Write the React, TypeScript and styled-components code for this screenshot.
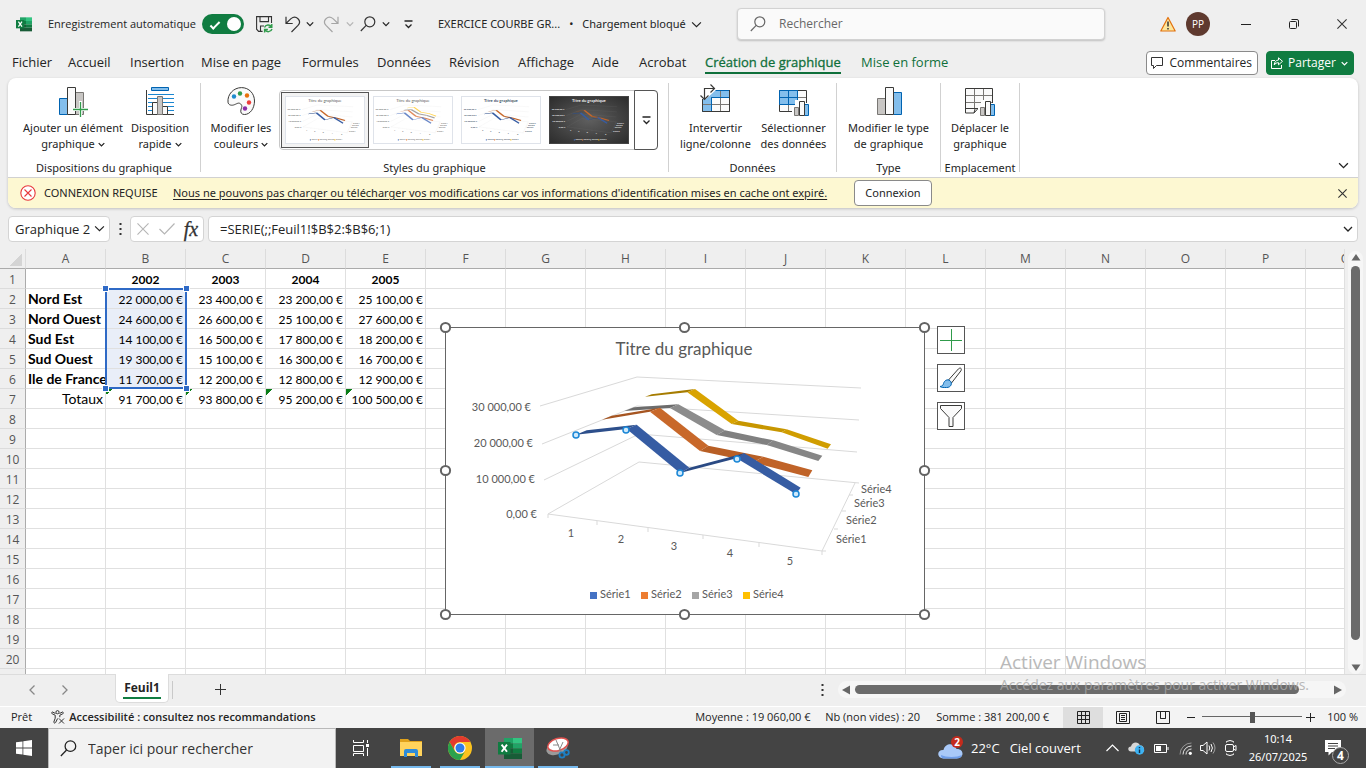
import React from 'react';
import styled, { createGlobalStyle, css } from 'styled-components';

const ui = '"Open Sans", "Noto Sans", sans-serif';
const compact = '"Noto Sans", "Open Sans", sans-serif';
const calibri = 'Lato, "Liberation Sans", sans-serif';
const green = '#107c41';

const Global = createGlobalStyle`
  *, *::before, *::after { box-sizing: border-box; }
  body { margin: 0; background: #efefef; color: #242424; font: 12px/16px ${ui}; overflow: hidden; }
  button, input { font: inherit; color: inherit; margin: 0; }
  svg { display: block; flex: none; }
`;

const Window = styled.div`
  height: 100vh;
  display: flex;
  flex-direction: column;
  position: relative;
`;

/* ---------- generic parts ---------- */

const IconButton = styled.button<{ $w?: number }>`
  width: ${p => p.$w ?? 24}px;
  height: 24px;
  flex: none;
  padding: 0;
  border: 0;
  background: none;
  display: flex;
  align-items: center;
  justify-content: center;
`;

const Chevron = ({ size = 8, color = '#242424', w = 1.3 }: { size?: number; color?: string; w?: number }) => (
  <svg width={size} height={size} viewBox="0 0 8 8" fill="none" stroke={color} strokeWidth={(w * 8) / size}>
    <path d="M.8 2.4 4 5.6 7.2 2.4" />
  </svg>
);

const Lens = ({ size = 16, color = '#444' }: { size?: number; color?: string }) => (
  <svg width={size} height={size} viewBox="0 0 16 16" fill="none" stroke={color} strokeWidth="1.2">
    <circle cx="9.8" cy="5.8" r="5" />
    <path d="M6.2 9.4.8 15" />
  </svg>
);

const Cross = ({ size = 10, color = '#333' }: { size?: number; color?: string }) => (
  <svg width={size} height={size} viewBox="0 0 10 10" fill="none" stroke={color} strokeWidth={11 / size}>
    <path d="M.4.4 9.6 9.6M9.6.4.4 9.6" />
  </svg>
);

const ExcelLogo = ({ size }: { size: number }) => (
  <svg width={size} height={size} viewBox="0 0 24 24">
    <path d="M6 2h9v5.5H6z" fill="#21a366" />
    <path d="M15 2h9v5.5h-9z" fill="#33c481" />
    <path d="M6 7.5h9v5H6z" fill="#107c41" />
    <path d="M15 7.5h9v5h-9z" fill="#21a366" />
    <path d="M6 12.5h9v5H6z" fill="#185c37" />
    <path d="M15 12.5h9v5h-9z" fill="#107c41" />
    <path d="M6 17.5h18V23H6z" fill="#185c37" />
    <path d="M0 6h12.5v12.5H0z" fill="#107c41" />
    <path d="m3.6 8.6 5.4 7.2M9 8.6l-5.4 7.2" stroke="#fff" strokeWidth="1.9" />
  </svg>
);

/* ---------- title bar ---------- */

const TitleBar = styled.header`
  height: 48px;
  flex: none;
  display: flex;
  align-items: center;
  padding-left: 16px;
`;
const TitleLeft = styled.div`
  display: flex;
  align-items: center;
  width: 422px;
  flex: none;
`;
const AutoSave = styled.label`
  display: flex;
  align-items: center;
  justify-content: space-between;
  width: 196px;
  flex: none;
  margin: 0 4px 0 16px;
  font-size: 11px;
  white-space: nowrap;
`;
const Toggle = styled.input`
  appearance: none;
  width: 42px;
  height: 20px;
  border-radius: 10px;
  background: ${green};
  display: flex;
  align-items: center;
  justify-content: space-between;
  padding: 0 3px 0 8px;
  &::before {
    content: '';
    width: 10px;
    height: 5px;
    border-left: 2px solid #fff;
    border-bottom: 2px solid #fff;
    transform: rotate(-45deg);
  }
  &::after { content: ''; width: 14px; height: 14px; border-radius: 50%; background: #fff; }
`;
const DocTitle = styled.div`
  display: flex;
  align-items: center;
  gap: 9px;
  width: 299px;
  flex: none;
  font: 11px/16px ${compact};
  white-space: nowrap;
`;
const StatusButton = styled.button`
  display: flex;
  align-items: center;
  gap: 5px;
  border: 0;
  padding: 0;
  background: none;
`;
const SearchBox = styled.label`
  flex: 0 1 368px;
  height: 32px;
  border: 1px solid #d2d2d2;
  border-radius: 4px;
  background: #fafafa;
  box-shadow: 0 1px 2px #0003;
  display: flex;
  align-items: center;
  gap: 13px;
  padding-left: 12px;
  input { flex: 1; min-width: 0; border: 0; background: none; outline: 0; padding: 0; }
  input::placeholder { color: #686868; opacity: 1; }
`;
const TitleRight = styled.div`
  margin-left: auto;
  display: flex;
  align-items: center;
  flex: none;
`;
const Avatar = styled.button`
  width: 24px;
  height: 24px;
  margin: 0 12px 0 6px;
  padding: 0;
  border: 0;
  border-radius: 50%;
  background: #5f3a2f;
  color: #fff;
  font-size: 10px;
`;

/* ---------- tab row ---------- */

const TabRow = styled.nav`
  height: 30px;
  flex: none;
  display: flex;
  align-items: center;
  padding: 0 12px;
`;
const Tab = styled.a<{ $w: number; $active?: boolean; $green?: boolean }>`
  flex: 0 0 ${p => p.$w}px;
  color: ${p => (p.$active || p.$green ? '#0f703b' : '#242424')};
  text-decoration: none;
  white-space: nowrap;
  font-size: 13px;
  span { display: block; width: fit-content; padding: 2px 0; border-bottom: 2px solid transparent; }
  ${p => p.$active && css`
    font-weight: 500;
    -webkit-text-stroke: 0.3px #0f703b;
    span { border-color: #0f703b; }
  `}
`;
const TabActions = styled.div`
  margin-left: auto;
  display: flex;
  gap: 8px;
`;
const ActionButton = styled.button<{ $primary?: boolean }>`
  height: 24px;
  width: ${p => (p.$primary ? 88 : 112)}px;
  padding: 0 5px 0 4px;
  border: 1px solid ${p => (p.$primary ? green : '#8a8a8a')};
  border-radius: 4px;
  background: ${p => (p.$primary ? green : '#fff')};
  color: ${p => (p.$primary ? '#fff' : '#242424')};
  display: flex;
  align-items: center;
  justify-content: space-between;
`;

/* ---------- ribbon ---------- */

const Card = styled.section`
  flex: none;
  margin: 0 8px;
  border-radius: 8px;
  background: #fff;
  box-shadow: 0 1px 3px #0003;
  overflow: hidden;
  font: 11px/16px ${compact};
`;
const Ribbon = styled.div`
  height: 99px;
  padding-top: 5px;
  display: flex;
`;
const Group = styled.div<{ $w: number }>`
  width: ${p => p.$w}px;
  height: 89px;
  flex: none;
  border-right: 1px solid #d1d1d1;
  display: flex;
  flex-direction: column;
  justify-content: space-between;
  align-items: center;
`;
const GroupBody = styled.div<{ $gap?: number; $left?: number; $right?: number }>`
  display: flex;
  gap: ${p => p.$gap ?? 0}px;
  padding: 4px ${p => p.$right ?? 0}px 0 ${p => p.$left ?? 0}px;
`;
const GroupLabel = styled.div`
  line-height: 8px;
`;
const BigButton = styled.button<{ $w: number }>`
  width: ${p => p.$w}px;
  border: 0;
  padding: 0;
  background: none;
  display: flex;
  flex-direction: column;
  align-items: center;
  gap: 3px;
  white-space: nowrap;
  span { display: flex; flex-direction: column; align-items: center; }
  em { font-style: normal; display: flex; gap: 3px; align-items: center; }
`;
const Gallery = styled.div`
  display: flex;
  width: 379px;
  height: 60px;
  margin-top: 3px;
  padding-left: 1px;
  border: 1px solid #c8c8c8;
  border-radius: 4px;
`;
const Thumb = styled.button<{ $on?: boolean; $dark?: boolean }>`
  width: 88px;
  height: 56px;
  margin: 1px 0 0 0;
  padding: 3px;
  border: 1px solid ${p => (p.$on ? '#555' : 'transparent')};
  background: ${p => (p.$on ? '#f3f3f3' : 'none')};
  svg {
    width: 80px;
    height: 48px;
    border: 1px solid ${p => (p.$dark ? '#444' : '#dfe3ea')};
    background: ${p => (p.$dark ? 'radial-gradient(#5f5f5f, #2c2c2c)' : '#fff')};
  }
`;
const MoreStyles = styled.button`
  width: 24px;
  margin: -1px -1px -1px auto;
  border: 1px solid #555;
  border-radius: 0 4px 4px 0;
  background: #fff;
  padding: 0;
  display: flex;
  align-items: center;
  justify-content: center;
`;
const Spacer = styled.div`
  margin: auto 3px 0 auto;
`;
const Message = styled.div`
  height: 31px;
  border-top: 1px solid #d1d1d1;
  background: #fdf8d2;
  display: flex;
  align-items: center;
  padding: 0 4px 0 12px;
  white-space: nowrap;
  a { flex: 0 1 681px; color: #242424; text-underline-offset: 2px; }
  strong { flex: 0 0 129px; font-weight: 400; margin-left: 8px; }
`;
const ConnectButton = styled.button`
  height: 26px;
  width: 78px;
  border: 1px solid #8a8a8a;
  border-radius: 4px;
  background: #fff;
  padding: 0;
  margin-right: auto;
`;

/* ---------- formula bar ---------- */

const FormulaBar = styled.div`
  height: 41px;
  flex: none;
  display: flex;
  align-items: center;
  padding: 0 8px;
  font-size: 13px;
`;
const Box = styled.div<{ $w?: number }>`
  height: 26px;
  ${p => (p.$w ? `width: ${p.$w}px; flex: none;` : 'flex: 1;')}
  border: 1px solid #d4d4d4;
  border-radius: 4px;
  background: #fff;
  display: flex;
  align-items: center;
  input { flex: 1; min-width: 0; border: 0; padding: 0 0 0 6px; outline: 0; background: none; }
`;
const FormulaInput = styled.input`
  && { padding-left: 11px; }
`;
const Dots = styled.span<{ $w: number }>`
  width: ${p => p.$w}px;
  flex: none;
  display: flex;
  justify-content: center;
`;
const Fx = styled.i`
  font: italic 20px/20px "Liberation Serif", serif;
  -webkit-text-stroke: 0.3px #333;
  color: #333;
`;

/* ---------- sheet ---------- */

const SheetArea = styled.main`
  flex: 1;
  min-height: 0;
  display: flex;
`;
const Canvas = styled.div`
  flex: 1;
  min-width: 0;
  overflow: hidden;
  position: relative;
  border-right: 1px solid #e0e0e0;
`;
const Grid = styled.table`
  border-spacing: 0;
  table-layout: fixed;
  width: 1386px;
  font-family: ${calibri};
  font-size: 12px;
  line-height: 17px;
  color: #000;
  th, td { height: 20px; padding: 2px 2px 0; vertical-align: top; overflow: hidden; white-space: nowrap; }
`;
const ColHead = styled.th`
  font: 12px/15px ${ui};
  color: #555;
  background: #efefef;
  border-right: 1px solid #dcdcdc;
  border-bottom: 1px solid #ababab;
`;
const RowHead = styled.th`
  font: 12px/17px ${ui};
  color: #555;
  background: #efefef;
  border-right: 1px solid #ababab;
  border-bottom: 1px solid #dcdcdc;
`;
const Corner = styled.th`
  background: linear-gradient(135deg, transparent 50%, #d4d4d4 50%) 10px 5px / 12px 12px no-repeat #efefef;
  border-right: 1px solid #dcdcdc;
  border-bottom: 1px solid #ababab;
`;
const Cell = styled.td<{ $bold?: boolean; $label?: boolean; $align?: string; $sel?: boolean; $flag?: boolean }>`
  border-right: 1px solid #e0e0e0;
  border-bottom: 1px solid #e0e0e0;
  background: ${p =>
    p.$sel ? '#e9eef8' : p.$flag ? 'linear-gradient(135deg, #0a7d18 50%, transparent 50%) 0 0 / 6px 6px no-repeat #fff' : '#fff'};
  font-weight: ${p => (p.$bold ? 700 : 400)};
  font-size: ${p => (p.$label ? 14 : 12)}px;
  line-height: ${p => (p.$label ? 15 : 17)}px;
  text-align: ${p => p.$align ?? 'left'};
`;
const RangeOutline = styled.div`
  position: absolute;
  left: 105px;
  top: 39px;
  width: 82px;
  height: 101px;
  border: 2px solid #2f6ac6;
`;
const RangeHandle = styled.i<{ $right?: boolean; $bottom?: boolean }>`
  position: absolute;
  width: 5px;
  height: 5px;
  background: #2f6ac6;
  outline: 1px solid #fff;
  ${p => (p.$right ? 'right' : 'left')}: -4px;
  ${p => (p.$bottom ? 'bottom' : 'top')}: -4px;
`;
const ChartFrame = styled.figure`
  position: absolute;
  left: 445px;
  top: 78px;
  width: 480px;
  height: 288px;
  margin: 0;
  border: 1px solid #666;
  background: #fff;
  svg { margin: -1px; overflow: visible; }
`;
const ChartTools = styled.div`
  position: absolute;
  left: 937px;
  top: 77px;
  display: grid;
  gap: 10px;
`;
const ChartTool = styled.button`
  width: 28px;
  height: 28px;
  padding: 0;
  border: 1px solid #555;
  background: #fff;
  display: flex;
  align-items: center;
  justify-content: center;
`;
const VScroll = styled.div`
  width: 21px;
  flex: none;
  padding: 2px 3px 0;
`;
const VTrack = styled.div`
  height: 100%;
  border-radius: 8px;
  background: #f6f6f6;
  display: flex;
  flex-direction: column;
  align-items: center;
  padding: 1px 0;
`;
const VThumb = styled.div`
  flex: 1;
  width: 9px;
  margin: 4px 0 23px;
  border-radius: 5px;
  background: #6b6b6b;
`;

/* ---------- sheet tabs / status ---------- */

const SheetTabs = styled.div`
  height: 32px;
  flex: none;
  border-top: 1px solid #dcdcdc;
  display: flex;
  align-items: center;
  padding: 0 20px 2px;
`;
const SheetTab = styled.button`
  align-self: flex-start;
  width: 54px;
  height: 29px;
  margin: -1px 0 0 38px;
  padding: 0 8px;
  border: 1px solid #dcdcdc;
  border-top: 0;
  border-radius: 0 0 5px 5px;
  background: #fff;
  font-weight: 700;
  span { display: block; margin: 0 -1px; line-height: 19px; border-bottom: 2px solid ${green}; }
`;
const Divider = styled.i`
  width: 1px;
  height: 18px;
  margin: 0 35px 0 3px;
  background: #c9c9c9;
`;
const HTrack = styled.div`
  flex: 0 0 508px;
  height: 17px;
  border-radius: 9px;
  background: #f6f6f6;
  display: flex;
  align-items: center;
  padding: 0 3px;
`;
const HThumb = styled.div`
  flex: 1;
  height: 9px;
  margin: 0 34px 0 4px;
  border-radius: 5px;
  background: #6b6b6b;
`;
const StatusBar = styled.footer`
  height: 22px;
  flex: none;
  border-top: 1px solid #fff;
  background: #f3f3f3;
  display: flex;
  align-items: center;
  padding: 0 8px 1px 11px;
  font-size: 11px;
  white-space: nowrap;
`;
const A11y = styled.button`
  border: 0;
  background: none;
  padding: 0;
  margin: 0 auto 0 19px;
  display: flex;
  gap: 4px;
  align-items: center;
  font-weight: 600;
`;
const Stat = styled.span<{ $w: number }>`
  width: ${p => p.$w}px;
`;
const ViewButton = styled.button<{ $on?: boolean }>`
  width: 40px;
  height: 21px;
  padding: 0;
  border: 0;
  background: ${p => (p.$on ? '#dedede' : 'none')};
  display: flex;
  align-items: center;
  justify-content: center;
`;
const Zoom = styled.input`
  appearance: none;
  width: 100px;
  height: 12px;
  margin: 0 3px;
  background: linear-gradient(#666, #666) 0 5px / 100% 1px no-repeat;
  &::-webkit-slider-thumb { appearance: none; width: 5px; height: 11px; background: #555; }
`;

/* ---------- taskbar ---------- */

const Taskbar = styled.footer`
  height: 40px;
  flex: none;
  background: #444;
  color: #fff;
  display: flex;
  align-items: center;
  font-size: 14px;
`;
const TaskSearch = styled.label`
  width: 288px;
  height: 40px;
  border: 1px solid #b9b9b9;
  border-bottom: 0;
  background: #f2f2f2;
  color: #333;
  display: flex;
  align-items: center;
  gap: 11px;
  padding-left: 11px;
  input { flex: 1; min-width: 0; border: 0; background: none; padding: 0; outline: 0; }
  input::placeholder { color: #333; opacity: 1; }
`;
const TaskButton = styled.button<{ $running?: boolean; $active?: boolean; $w?: number }>`
  width: ${p => p.$w ?? 49}px;
  height: 40px;
  padding: 0;
  border: 0;
  border-left: ${p => (p.$running ? 4 : 0)}px solid transparent;
  border-right: ${p => (p.$running ? 5 : 0)}px solid transparent;
  background: ${p =>
    p.$active
      ? 'linear-gradient(#76b9ed, #76b9ed) 0 100% / 100% 2px no-repeat #6b6b6b'
      : p.$running
        ? 'linear-gradient(#76b9ed, #76b9ed) 0 100% / 100% 2px no-repeat padding-box'
        : 'none'};
  display: flex;
  align-items: center;
  justify-content: center;
`;
const Tray = styled.div`
  margin-left: auto;
  display: flex;
  align-items: center;
`;
const Weather = styled.button`
  border: 0;
  padding: 0;
  background: none;
  color: inherit;
  width: 159px;
  display: flex;
  align-items: center;
  font-size: 13px;
  white-space: nowrap;
  span { margin-left: 6px; }
  span + span { margin-left: 10px; }
`;
const Clock = styled.time`
  width: 76px;
  text-align: center;
  font: 11px/18px ${compact};
`;
const Notifications = styled.button`
  width: 50px;
  padding: 8px 0 0 9px;
  border: 0;
  background: none;
`;
const Watermark = styled.div`
  position: absolute;
  left: 1000px;
  bottom: 73px;
  color: #a8a8a8;
  opacity: .8;
  font-size: 14px;
  line-height: 20px;
  white-space: nowrap;
  pointer-events: none;
  p { margin: 0; }
  p:first-child { font-size: 19px; line-height: 26px; }
`;

/* ---------- chart drawing ---------- */

const series = [
  { name: 'Série4', key: '#ffc000', faces: [['645,245 665,238 795,222 772,232', '#a67c00'], ['772,232 795,222 925,317 905,327', '#d9a300'], ['905,327 925,317 1070,343 1055,352', '#c79600'], ['1055,352 1070,343 1203,388 1193,401', '#d09d00']] },
  { name: 'Série3', key: '#a5a5a5', faces: [['583,288 612,277 745,268 720,279', '#6c6c6c'], ['720,279 745,268 885,346 860,360', '#8c8c8c'], ['860,360 885,346 1030,376 1010,390', '#808080'], ['1010,390 1030,376 1177,422 1165,438', '#868686']] },
  { name: 'Série2', key: '#ed7d31', faces: [['516,314 545,302 690,278 660,290', '#a65521'], ['660,290 690,278 835,392 810,408', '#c8682a'], ['810,408 835,392 1000,425 970,442', '#b85f25'], ['970,442 1000,425 1147,466 1135,486', '#c06328']] },
  { name: 'Série1', key: '#4472c4', faces: [['438,359 470,346 620,329 590,342', '#2d4f8b'], ['590,342 620,329 778,458 750,474', '#365ca3'], ['750,474 778,458 942,415 920,430', '#2a4a84'], ['920,430 942,414 1112,518 1097,537', '#365ca3']] },
];

const Plot = ({ lines = '#d9d9d9', keep = [0, 1, 2, 3], colors }: { lines?: string; keep?: number[]; colors?: string[] }) => (
  <>
    <g fill="none" stroke={lines}>
      <path d="M95 79 192 50 416 61M97 117 192 79 414 93M99 153 194 107 412 125M103 187 194 135 414 156M103 187 377 224 410 156" />
      <path d="M103 187v4M152 194v4M203 201v4M258 208v4M314 216v4M377 224v4M404 168h4M397 184h4M389 202h4M377 224h4" />
    </g>
    <g transform="translate(-15 -12) scale(.33333)">
      {series.map((s, i) => keep.includes(i) && s.faces.map(([pts, c]) => <polygon key={pts} points={pts} fill={colors ? colors[i] : c} />))}
    </g>
  </>
);

const PlotText = ({ fill = '#595959', mini = false, bold = false }: { fill?: string; mini?: boolean; bold?: boolean }) => (
  <g fill={fill} fontFamily={calibri} fontSize={mini ? 15 : 11} fontWeight={bold ? 700 : 400}>
    <text x="239" y={mini ? 32 : 28} fontSize={mini ? 26 : 17} textAnchor="middle">Titre du graphique</text>
    <g textAnchor="end">
      <text x="86" y="84">30 000,00 €</text>
      <text x="88" y="120">20 000,00 €</text>
      <text x="90" y="156">10 000,00 €</text>
      <text x="92" y="191">0,00 €</text>
    </g>
    <g textAnchor="middle">
      <text x="126" y="210">1</text>
      <text x="176" y="216">2</text>
      <text x="229" y="223">3</text>
      <text x="285" y="230">4</text>
      <text x="345" y="238">5</text>
    </g>
    <text x="416" y="166">Série4</text>
    <text x="409" y="180">Série3</text>
    <text x="401" y="197">Série2</text>
    <text x="391" y="216">Série1</text>
    {[...series].reverse().map((s, i) => (
      <g key={s.name}>
        <rect x={145 + i * 51} y="265" width="7" height="7" fill={s.key} />
        <text x={155 + i * 51} y="271">{s.name}</text>
      </g>
    ))}
  </g>
);

const Chart = () => (
  <ChartFrame aria-label="Titre du graphique">
    <svg width="480" height="288" viewBox="0 0 480 288">
      <Plot />
      <PlotText />
      <g fill="#cfe9fb" stroke="#1b87d6" strokeWidth="1.5">
        {[[131, 108], [181, 103], [235, 146], [292, 132], [351, 167]].map(([x, y]) => <circle key={x} cx={x} cy={y} r="3" />)}
      </g>
      <g fill="#fff" stroke="#636363" strokeWidth="2">
        {[[0, 0], [239, 0], [479, 0], [0, 143], [479, 143], [0, 287], [239, 287], [479, 287]].map(([x, y]) => (
          <circle key={`${x}-${y}`} cx={x + .5} cy={y + .5} r="4.6" />
        ))}
      </g>
    </svg>
  </ChartFrame>
);

/* ---------- ribbon icons ---------- */

const Svg30 = ({ children }: { children: React.ReactNode }) => (
  <svg width="30" height="30" viewBox="0 0 30 30" fill="none" overflow="visible">{children}</svg>
);
const blue = { fill: '#83beec', stroke: '#0063b1' };
const grey = { fill: '#c8c6c4', stroke: '#797774' };
const white = { fill: '#fafafa', stroke: '#3a3a38' };

const AddElementIcon = () => (
  <Svg30>
    <path {...blue} d="M1.500 11.500h8v16h-8z" />
    <path {...grey} d="M17.500 5.500h8v22h-8z" />
    <path {...white} d="M9.500.5h8v27h-8z" />
    <path d="M22.500 14v16M14.500 22.500h15.500" stroke="#fff" strokeWidth="3" />
    <path d="M22.500 15v15M15 22.500h15" stroke="#309b4b" strokeWidth="1.300" />
  </Svg30>
);
const QuickLayoutIcon = () => (
  <Svg30>
    <path {...blue} d="M6.500.5h17v3h-17z" />
    <path d="M3 7.500h26M3 11.500h26M3 15.500h26M3 19.500h26M3 23.500h26" stroke="#1a86d0" />
    <path d="M1.500 3v24.500H29" stroke="#3a3a38" />
    <path {...white} d="M7.500 15.500h5v12h-5zM17.500 19.500h5v8h-5z" />
    <path {...grey} d="M12.500 9.500h5v18h-5z" />
  </Svg30>
);
const PaletteIcon = () => (
  <Svg30>
    <path {...white} d="M2 15.200C1.200 7.500 7.500.6 15.500.6 23 .6 28.500 6.500 28.500 14c0 7.500-4.500 13.500-10 13.500-3 0-4.200-2-3.600-4.500.6-2.600 1.900-4-.2-6-1.900-1.800-3.600-.4-6 .6-3 1.300-6.300.6-6.700-2.400z" />
    <circle cx="8" cy="9.500" r="2.200" fill="#1e8bcd" />
    <circle cx="14" cy="6.500" r="2.200" fill="#309b4b" />
    <circle cx="21" cy="8.500" r="2.200" fill="#e8710a" />
    <circle cx="23" cy="15.500" r="2.200" fill="#ed3d3b" />
    <circle cx="19" cy="21.500" r="2.200" fill="#8b2fa8" />
  </Svg30>
);
const SwitchIcon = () => (
  <Svg30>
    <path {...white} d="M1.500 3.500h27v21h-27z" />
    <path d="M8 4h20v6H8zM2 10h8v14H2z" fill="#83beec" />
    <path d="M10.500 10v14M19.500 10v14M10 10.500h18M2 17.500h26M19.500 4v6" stroke="#797774" />
    <path d="M8 3.500h20.500M1.500 24.500h9V10.500h18" stroke="#0063b1" />
    <path d="M0-2h15v5L5 12H0z" fill="#fff" />
    <path d="M28.500 3v21.500H1.500" stroke="#3a3a38" />
    <path d="M3.500 12V1.500h10M-.5 8.500l4 4 4-4M9.500-2.500l4 4-4 4" stroke="#3a3a38" strokeWidth="1.200" />
  </Svg30>
);
const MiniBars = () => (
  <>
    <path d="M13 19h3v-6h8v3h6v14H13z" fill="#fff" />
    <path {...grey} d="M15.500 20.500h4v8h-4z" />
    <path {...blue} d="M25.500 17.500h4v11h-4z" />
    <path {...white} d="M20.500 14.500h5v14h-5z" />
  </>
);
const SelectDataIcon = () => (
  <Svg30>
    <path {...white} d="M.5 3.500h27v21H.5z" />
    <path d="M18.500 4v20M1 17.500h26M9.500 17v7M19 10.500h8" stroke="#797774" />
    <path {...blue} d="M.5 3.500h18v14H.5zM9.500 4v13M1 10.500h17" />
    <MiniBars />
  </Svg30>
);
const ChartTypeIcon = () => (
  <Svg30>
    <path {...grey} d="M3.500 11.500h8v16h-8z" />
    <path {...blue} d="M19.500 5.500h8v22h-8z" />
    <path {...white} d="M11.500.5h8v27h-8z" />
  </Svg30>
);
const MoveChartIcon = () => (
  <Svg30>
    <path {...white} d="M.5 1.500h27v20H13l-4 4.500H.5z" />
    <path d="M1 8.500h26M1 15.500h26M9.500 2v19M18.500 2v19" stroke="#797774" />
    <path d="M.5 21.500H13M9 26l1-4" stroke="#3a3a38" />
    <MiniBars />
  </Svg30>
);

const MoreIcon = () => (
  <svg width="9" height="9" viewBox="0 0 9 9" fill="none" stroke="#242424" strokeWidth="1.300"><path d="M.5 1h8M1.500 4.500l3 3 3-3" /></svg>
);
const DotsIcon = () => (
  <svg width="3" height="12" viewBox="0 0 3 12" fill="#333"><path d="M.5 0h2v2h-2zM.5 5h2v2h-2zM.5 10h2v2h-2z" /></svg>
);
const Arrow = ({ d }: { d: string }) => (
  <svg width="10" height="10" viewBox="0 0 10 10" fill="#666"><path d={d} /></svg>
);

const Big = ({ w, icon, a, b, menu }: { w: number; icon: React.ReactNode; a: string; b: string; menu?: boolean }) => (
  <BigButton $w={w}>
    {icon}
    <span>
      {a}
      <em>{b}{menu && <Chevron size={7} />}</em>
    </span>
  </BigButton>
);

/* ---------- data ---------- */

const tabs: [string, number][] = [
  ['Fichier', 56], ['Accueil', 62], ['Insertion', 71], ['Mise en page', 101], ['Formules', 75], ['Données', 72],
  ['Révision', 69], ['Affichage', 74], ['Aide', 47], ['Acrobat', 66], ['Création de graphique', 156], ['Mise en forme', 90],
];
const cols = 'ABCDEFGHIJKLMNOPQ'.split('');
const rows: Record<number, string[]> = {
  1: ['', '2002', '2003', '2004', '2005'],
  2: ['Nord Est', '22 000,00 €', '23 400,00 €', '23 200,00 €', '25 100,00 €'],
  3: ['Nord Ouest', '24 600,00 €', '26 600,00 €', '25 100,00 €', '27 600,00 €'],
  4: ['Sud Est', '14 100,00 €', '16 500,00 €', '17 800,00 €', '18 200,00 €'],
  5: ['Sud Ouest', '19 300,00 €', '15 100,00 €', '16 300,00 €', '16 700,00 €'],
  6: ['Ile de France', '11 700,00 €', '12 200,00 €', '12 800,00 €', '12 900,00 €'],
  7: ['Totaux', '91 700,00 €', '93 800,00 €', '95 200,00 €', '100 500,00 €'],
};

const Spreadsheet = () => (
  <Grid>
    <colgroup>
      <col style={{ width: 26 }} />
      {cols.map(c => <col key={c} style={{ width: 80 }} />)}
    </colgroup>
    <thead>
      <tr>
        <Corner />
        {cols.map(c => <ColHead key={c} scope="col">{c}</ColHead>)}
      </tr>
    </thead>
    <tbody>
      {Array.from({ length: 21 }, (_, i) => i + 1).map(r => (
        <tr key={r}>
          <RowHead scope="row">{r < 21 ? r : ''}</RowHead>
          {cols.map((c, i) => (
            <Cell
              key={c}
              $label={i === 0}
              $bold={r === 1 || (i === 0 && r < 7)}
              $align={r === 1 ? 'center' : i > 0 || r === 7 ? 'right' : 'left'}
              $sel={i === 1 && r > 1 && r < 7}
              $flag={r === 7 && i > 0 && i < 5}
            >
              {rows[r]?.[i]}
            </Cell>
          ))}
        </tr>
      ))}
    </tbody>
  </Grid>
);

export default function App() {
  return (
    <Window>
      <Global />

      <TitleBar>
        <TitleLeft>
          <ExcelLogo size={16} />
          <AutoSave>
            Enregistrement automatique
            <Toggle type="checkbox" defaultChecked />
          </AutoSave>
          <IconButton $w={32} aria-label="Enregistrer">
            <svg width="17" height="17" viewBox="0 0 17 17" fill="none" stroke="#333" strokeWidth="1.100">
              <path d="M15.500 7V.6H.6v12.600l2 2.200h4M4 .6v5h8.500v-5M4.500 15v-5H8" />
              <path d="M8.500 11.500c1-3 5.500-3.500 7-.5M15.800 8v3.300h-3.300M16 13c-1 3.200-5.500 3.700-7.200.7M8.600 16.500v-3h3.300" stroke="#309b4b" strokeWidth="1.400" />
            </svg>
          </IconButton>
          <IconButton $w={25} aria-label="Annuler">
            <svg width="16" height="17" viewBox="0 0 16 17" fill="none" stroke="#333" strokeWidth="1.200">
              <path d="M1 .8v6.700h6.700M1.200 7.300 6 2.600c5-4 11.300 2 7 6.800L6.500 16" />
            </svg>
          </IconButton>
          <IconButton $w={10} aria-label="Options d'annulation"><Chevron /></IconButton>
          <IconButton $w={31} aria-label="Rétablir">
            <svg width="16" height="17" viewBox="0 0 16 17" fill="none" stroke="#a5a5a5" strokeWidth="1.200">
              <path d="M15 .8v6.700H8.300M14.800 7.300 10 2.600C5-1.400-1.300 4.600 3 9.400L9.500 16" />
            </svg>
          </IconButton>
          <IconButton $w={8} aria-label="Options de rétablissement"><Chevron color="#b5b5b5" /></IconButton>
          <IconButton $w={27} aria-label="Rechercher"><Lens color="#333" /></IconButton>
          <IconButton $w={10} aria-label="Options de recherche"><Chevron /></IconButton>
          <IconButton $w={35} aria-label="Personnaliser"><MoreIcon /></IconButton>
        </TitleLeft>
        <DocTitle>
          <span>EXERCICE COURBE GR...</span>
          <span>•</span>
          <StatusButton>Chargement bloqué <Chevron size={11} w={1.2} /></StatusButton>
        </DocTitle>
        <SearchBox>
          <Lens color="#666" />
          <input type="text" placeholder="Rechercher" aria-label="Rechercher" />
        </SearchBox>
        <TitleRight>
          <IconButton aria-label="Avertissement">
            <svg width="16" height="16" viewBox="0 0 16 16">
              <path d="M8 1.500 15.200 15H.8z" fill="#fde69b" stroke="#e2700c" strokeWidth="1.200" strokeLinejoin="round" />
              <path d="M8 5.500v5M8 12v1.600" stroke="#333" strokeWidth="1.500" />
            </svg>
          </IconButton>
          <Avatar>PP</Avatar>
          <IconButton $w={48} aria-label="Réduire"><svg width="10" height="10" stroke="#222"><path d="M0 5.500h10" /></svg></IconButton>
          <IconButton $w={48} aria-label="Restaurer">
            <svg width="10" height="10" viewBox="0 0 10 10" fill="none" stroke="#222"><rect x=".5" y="2.500" width="7" height="7" rx="1" /><path d="M2.500.500H8Q9.500.500 9.500 2v5.500" /></svg>
          </IconButton>
          <IconButton $w={48} aria-label="Fermer"><Cross /></IconButton>
        </TitleRight>
      </TitleBar>

      <TabRow>
        {tabs.map(([t, w]) => (
          <Tab key={t} href="#" $w={w} $active={t === 'Création de graphique'} $green={t === 'Mise en forme'}><span>{t}</span></Tab>
        ))}
        <TabActions>
          <ActionButton>
            <svg width="12" height="12" viewBox="0 0 12 12" fill="none" stroke="#333"><path d="M.5.500h11v8H5.500l-3 3v-3h-2z" /></svg>
            Commentaires
          </ActionButton>
          <ActionButton $primary>
            <svg width="12" height="12" viewBox="0 0 12 12" fill="none" stroke="#fff"><path d="M4 3.500H.5v8h10V8M7.500.800l4 3.500-4 3.500V5.700C5.500 5.600 4.200 6.500 3.200 8c.2-3 1.800-4.800 4.300-5z" /></svg>
            Partager
            <Chevron size={7} color="#fff" />
          </ActionButton>
        </TabActions>
      </TabRow>

      <Card>
        <Ribbon>
          <Group $w={193}>
            <GroupBody $left={8}>
              <Big w={104} icon={<AddElementIcon />} a="Ajouter un élément" b="graphique" menu />
              <Big w={70} icon={<QuickLayoutIcon />} a="Disposition" b="rapide" menu />
            </GroupBody>
            <GroupLabel>Dispositions du graphique</GroupLabel>
          </Group>
          <Group $w={468}>
            <GroupBody $gap={4} $right={4}>
              <Big w={68} icon={<PaletteIcon />} a="Modifier les" b="couleurs" menu />
              <Gallery>
                <Thumb $on aria-label="Style 1">
                  <svg viewBox="0 0 480 288"><Plot keep={[2, 3]} /><PlotText mini /></svg>
                </Thumb>
                <Thumb aria-label="Style 2">
                  <svg viewBox="0 0 480 288"><Plot colors={['#ffd34d', '#a0a0a0', '#e08a5c', '#6a88c8']} /><PlotText mini /></svg>
                </Thumb>
                <Thumb aria-label="Style 3">
                  <svg viewBox="0 0 480 288"><Plot keep={[2, 3]} /><PlotText mini bold fill="#44546a" /></svg>
                </Thumb>
                <Thumb $dark aria-label="Style 4">
                  <svg viewBox="0 0 480 288"><Plot lines="#777" keep={[2, 3]} /><PlotText mini bold fill="#eee" /></svg>
                </Thumb>
                <MoreStyles aria-label="Autres styles"><MoreIcon /></MoreStyles>
              </Gallery>
            </GroupBody>
            <GroupLabel>Styles du graphique</GroupLabel>
          </Group>
          <Group $w={168}>
            <GroupBody $left={4}>
              <Big w={78} icon={<SwitchIcon />} a="Intervertir" b="ligne/colonne" />
              <Big w={78} icon={<SelectDataIcon />} a="Sélectionner" b="des données" />
            </GroupBody>
            <GroupLabel>Données</GroupLabel>
          </Group>
          <Group $w={104}>
            <GroupBody><Big w={90} icon={<ChartTypeIcon />} a="Modifier le type" b="de graphique" /></GroupBody>
            <GroupLabel>Type</GroupLabel>
          </Group>
          <Group $w={79}>
            <GroupBody><Big w={70} icon={<MoveChartIcon />} a="Déplacer le" b="graphique" /></GroupBody>
            <GroupLabel>Emplacement</GroupLabel>
          </Group>
          <Spacer><IconButton aria-label="Réduire le ruban"><Chevron size={11} /></IconButton></Spacer>
        </Ribbon>
        <Message>
          <svg width="16" height="16" viewBox="0 0 16 16" fill="#fff" stroke="#e8383d" strokeWidth="1.100"><circle cx="8" cy="8" r="7.200" /><path d="m4.500 4.500 7 7m0-7-7 7" /></svg>
          <strong>CONNEXION REQUISE</strong>
          <a href="#">Nous ne pouvons pas charger ou télécharger vos modifications car vos informations d'identification mises en cache ont expiré.</a>
          <ConnectButton>Connexion</ConnectButton>
          <IconButton aria-label="Fermer le message"><Cross size={9} /></IconButton>
        </Message>
      </Card>

      <FormulaBar>
        <Box $w={102}>
          <input type="text" defaultValue="Graphique 2" aria-label="Zone Nom" />
          <IconButton $w={19} aria-label="Liste des noms"><Chevron size={11} w={1.2} /></IconButton>
        </Box>
        <Dots $w={20}><DotsIcon /></Dots>
        <Box $w={74}>
          <IconButton aria-label="Annuler la saisie"><Cross size={12} color="#b5b5b5" /></IconButton>
          <IconButton aria-label="Valider"><svg width="16" height="12" viewBox="0 0 16 12" fill="none" stroke="#b5b5b5" strokeWidth="1.200"><path d="m.5 6 5 5L15.500.500" /></svg></IconButton>
          <IconButton aria-label="Insérer une fonction"><Fx>fx</Fx></IconButton>
        </Box>
        <Dots $w={4} />
        <Box>
          <FormulaInput type="text" defaultValue="=SERIE(;;Feuil1!$B$2:$B$6;1)" aria-label="Formule" />
          <IconButton $w={18} aria-label="Développer"><Chevron size={10} /></IconButton>
        </Box>
      </FormulaBar>

      <SheetArea>
        <Canvas>
          <Spreadsheet />
          <RangeOutline>
            <RangeHandle /><RangeHandle $right /><RangeHandle $bottom /><RangeHandle $right $bottom />
          </RangeOutline>
          <Chart />
          <ChartTools>
            <ChartTool aria-label="Éléments du graphique">
              <svg width="22" height="22" stroke="#309b4b"><path d="M0 11.500h22M11.500 0v22" /></svg>
            </ChartTool>
            <ChartTool aria-label="Styles du graphique">
              <svg width="24" height="24" viewBox="0 0 24 24" fill="#fafafa" stroke="#3a3a38">
                <path d="M9.500 14 19.500 2.800c2-1.700 3.800-.2 2.300 2.200L12.500 17z" />
                <path d="M1 20.500c2-.2 3-1 3.500-3 .8-3 4-4.800 6.500-2.800 2.800 2.500 1 7-3.500 6.800-2.500 0-5 .2-6.500-1z" fill="#83beec" stroke="#0063b1" />
              </svg>
            </ChartTool>
            <ChartTool aria-label="Filtres du graphique">
              <svg width="22" height="22" viewBox="0 0 22 22" fill="#fafafa" stroke="#3a3a38"><path d="M.5.500h21v3l-8.500 9v9H9v-9l-8.500-9z" /></svg>
            </ChartTool>
          </ChartTools>
        </Canvas>
        <VScroll>
          <VTrack>
            <Arrow d="M5 2 9.500 8.500h-9z" />
            <VThumb />
            <Arrow d="M5 8 9.500 1.500h-9z" />
          </VTrack>
        </VScroll>
      </SheetArea>

      <SheetTabs>
        <IconButton aria-label="Feuille précédente"><svg width="6" height="10" viewBox="0 0 6 10" fill="none" stroke="#888" strokeWidth="1.300"><path d="M5.500.500 1 5l4.500 4.500" /></svg></IconButton>
        <Dots $w={9} />
        <IconButton aria-label="Feuille suivante"><svg width="6" height="10" viewBox="0 0 6 10" fill="none" stroke="#888" strokeWidth="1.300"><path d="M.5.500 5 5 .5 9.500" /></svg></IconButton>
        <SheetTab><span>Feuil1</span></SheetTab>
        <Divider />
        <IconButton aria-label="Nouvelle feuille"><svg width="11" height="11" stroke="#333"><path d="M0 5.500h11M5.500 0v11" /></svg></IconButton>
        <Spacer />
        <Dots $w={32}><DotsIcon /></Dots>
        <HTrack>
          <Arrow d="M1 5 9 .5v9z" />
          <HThumb />
          <Arrow d="M9 5 1 .5v9z" />
        </HTrack>
      </SheetTabs>

      <StatusBar>
        <span>Prêt</span>
        <A11y>
          <svg width="14" height="14" viewBox="0 0 14 14" fill="none" stroke="#333">
            <circle cx="6.500" cy="2.200" r="1.600" />
            <path d="M4.500 3.500 1.500 2C.5 2 .5 3.500 1.200 3.800l3 1.400v3L2.800 12c0 1.200 1.300 1.500 1.800.5l2-4M8.500 3.500l3-1.500c1 0 1 1.500.300 1.800l-3 1.400v2M8 8.500l5 5m0-5-5 5" />
          </svg>
          Accessibilité : consultez nos recommandations
        </A11y>
        <Stat $w={130}>Moyenne : 19 060,00 €</Stat>
        <Stat $w={111}>Nb (non vides) : 20</Stat>
        <Stat $w={127}>Somme : 381 200,00 €</Stat>
        <ViewButton $on aria-label="Normal"><svg width="13" height="13" viewBox="0 0 13 13" fill="none" stroke="#222"><path d="M.5.500h12v12H.5zM4.500 0v13M8.500 0v13M0 4.500h13M0 8.500h13" /></svg></ViewButton>
        <ViewButton aria-label="Mise en page"><svg width="14" height="13" viewBox="0 0 14 13" fill="none" stroke="#222"><path d="M.5.500h13v12H.5zM3.500 2.500h7v8h-7zM5 4.500h4M5 6.500h4M5 8.500h4" /></svg></ViewButton>
        <ViewButton aria-label="Sauts de page"><svg width="14" height="13" viewBox="0 0 14 13" fill="none" stroke="#222"><path d="M.5.500h13v12H.5zM4.500.500v7h5v-7M4.500 7.500h5" /></svg></ViewButton>
        <IconButton $w={16} aria-label="Zoom arrière"><svg width="8" height="9" stroke="#222"><path d="M0 4.500h8" /></svg></IconButton>
        <Zoom type="range" min="10" max="190" defaultValue="100" aria-label="Zoom" />
        <IconButton $w={10} aria-label="Zoom avant"><svg width="9" height="9" stroke="#222"><path d="M0 4.500h9M4.500 0v9" /></svg></IconButton>
        <Dots $w={12} />
        <span>100 %</span>
      </StatusBar>

      <Taskbar>
        <TaskButton $w={48} aria-label="Démarrer">
          <svg width="16" height="16" viewBox="0 0 16 16" fill="#fff"><path d="M0 2.300 6.500 1.400v6.200H0zM7.300 1.300 16 0v7.600H7.300zM0 8.400h6.500v6.200L0 13.700zM7.300 8.400H16V16l-8.700-1.200z" /></svg>
        </TaskButton>
        <TaskSearch>
          <Lens size={17} color="#222" />
          <input type="text" placeholder="Taper ici pour rechercher" aria-label="Recherche Windows" />
        </TaskSearch>
        <TaskButton aria-label="Affichage des tâches">
          <svg width="16" height="16" viewBox="0 0 16 16" fill="none" stroke="#fff"><path d="M.5 0v2.500h10V0M.5 5.500h10v6H.5zM.5 16v-2.500h10V16M14.500 0v3M14.500 8v8" /><path d="M13 4h3v3h-3z" fill="#fff" stroke="none" /></svg>
        </TaskButton>
        <Dots $w={2} />
        <TaskButton $running aria-label="Explorateur de fichiers">
          <svg width="22" height="18" viewBox="0 0 22 18"><path d="M0 0h8l2 2h12v15H0z" fill="#e0a21b" /><path d="M0 3h22v14H0z" fill="#ffd35c" /><path d="M4 18v-6q0-2 2-2h10q2 0 2 2v6h-3v-4H7v4z" fill="#2f8bd8" /></svg>
        </TaskButton>
        <TaskButton $running aria-label="Google Chrome">
          <svg width="24" height="24" viewBox="0 0 24 24">
            <circle cx="12" cy="12" r="12" fill="#fcc31e" />
            <path d="M1.600 6A12 12 0 0 1 22.400 6H12a6 6 0 0 0-5.200 9z" fill="#e33b2e" />
            <path d="M1.600 6 6.800 15A6 6 0 0 0 17.200 15L12 24A12 12 0 0 1 1.600 6z" fill="#2ba24c" />
            <circle cx="12" cy="12" r="5.600" fill="#fff" /><circle cx="12" cy="12" r="4.500" fill="#2f7de9" />
          </svg>
        </TaskButton>
        <TaskButton $active aria-label="Excel"><ExcelLogo size={24} /></TaskButton>
        <TaskButton $running aria-label="Outil Capture">
          <svg width="24" height="22" viewBox="0 0 24 22" fill="none">
            <ellipse cx="11" cy="11" rx="11" ry="6.500" fill="#9b9b9b" transform="rotate(-20 11 11)" />
            <ellipse cx="12" cy="7.500" rx="10.500" ry="6" fill="#fff" stroke="#e0524f" strokeWidth="1.500" transform="rotate(-18 12 7.500)" />
            <path d="m10 3 5 12M17 5l-4 9M7 8h6" stroke="#888" />
            <circle cx="16" cy="18" r="2.600" stroke="#1d7fc4" strokeWidth="1.800" /><circle cx="20.500" cy="15.500" r="2.300" stroke="#1d7fc4" strokeWidth="1.800" />
          </svg>
        </TaskButton>
        <Tray>
          <Weather>
            <svg width="27" height="26" viewBox="0 0 27 26">
              <path d="M5.500 23.500c-7 0-7-9 0-8.500C7 7.500 17 7.500 18.500 14c8-.5 8 9.500 0 9.500z" fill="#a9c9f8" />
              <path d="M3 20c5 2.500 16 2.500 21 0-.8 2.500-2.500 3.500-5.500 3.500h-13C4 23.500 3 22 3 20z" fill="#6f9eea" />
              <circle cx="19" cy="7" r="6" fill="#c42b1c" />
              <text x="19" y="10.500" fontSize="10" fontWeight="700" fill="#fff" textAnchor="middle">2</text>
            </svg>
            <span>22°C</span><span>Ciel couvert</span>
          </Weather>
          <IconButton $w={30} aria-label="Icônes cachées"><svg width="13" height="8" viewBox="0 0 13 8" fill="none" stroke="#fff" strokeWidth="1.200"><path d="M.5 7 6.500 1l6 6" /></svg></IconButton>
          <IconButton $w={18} aria-label="OneDrive">
            <svg width="17" height="14" viewBox="0 0 17 14"><path d="M3 10.500C-.8 10-.5 5.500 3 5.500 4 .5 10.500.3 12 4.500c3-.3 4.500 2 4 6z" fill="#d6d6d6" /><circle cx="11.500" cy="9" r="4.700" fill="#3db2f2" /><path d="M11.500 6v1.300M11.500 8.500v3.500" stroke="#12304a" strokeWidth="1.400" /></svg>
          </IconButton>
          <IconButton $w={32} aria-label="Batterie"><svg width="15" height="9" viewBox="0 0 15 9" fill="none" stroke="#fff"><path d="M.5.500h12v8H.5zM14 3v3" /><path d="M2 2h5v5H2z" fill="#fff" stroke="none" /></svg></IconButton>
          <IconButton $w={17} aria-label="Réseau"><svg width="13" height="13" viewBox="0 0 13 13" fill="none" stroke="#e8e8e8"><path d="M12.500 1A11.500 11.500 0 0 0 1 12.500" opacity=".5" /><path d="M12.500 4A8.500 8.500 0 0 0 4 12.500M12.500 7A5.500 5.500 0 0 0 7 12.500" /><circle cx="11.300" cy="11.300" r="1.600" fill="#fff" stroke="none" /></svg></IconButton>
          <IconButton $w={28} aria-label="Volume"><svg width="16" height="14" viewBox="0 0 16 14" fill="none" stroke="#fff"><path d="M.5 4.500h2.500L7 1v12L3 9.500H.5zM9 4.500q1.500 2.500 0 5M11 3q2.800 4 0 8" /><path d="M13 1.500q4 5.500 0 11" opacity=".5" /></svg></IconButton>
          <IconButton $w={18} aria-label="Caméra"><svg width="12" height="16" viewBox="0 0 12 16" fill="none" stroke="#fff"><rect x=".5" y="4.500" width="8" height="7" rx="1.500" /><path d="m8.500 7 2.500-1.500v5L8.500 9M1.500 2.500V1.500Q5-.5 8.500 1.500v1M1.500 13.500v1Q5 16.500 8.500 14.500v-1" /></svg></IconButton>
          <Clock>10:14<br />26/07/2025</Clock>
          <Notifications aria-label="Notifications">
            <svg width="25" height="24" viewBox="0 0 25 24">
              <path d="M0 0h16v12H7l-3.500 3.500V12H0z" fill="#fff" /><path d="M3 3.500h10M3 6h10M3 8.500h7" stroke="#444" />
              <circle cx="15.500" cy="15.500" r="8" fill="#444" stroke="#aaa" />
              <text x="15.500" y="20" fontSize="12" fontWeight="700" fill="#fff" textAnchor="middle">4</text>
            </svg>
          </Notifications>
        </Tray>
      </Taskbar>

      <Watermark>
        <p>Activer Windows</p>
        <p>Accédez aux paramètres pour activer Windows.</p>
      </Watermark>
    </Window>
  );
}
